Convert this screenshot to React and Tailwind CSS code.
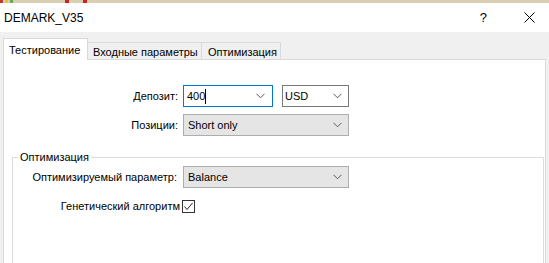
import React from "react";

const Chevron = () => (
  <svg width="9" height="6" viewBox="0 0 9 6" className="shrink-0">
    <polyline points="0.5,0.8 4.5,4.8 8.5,0.8" fill="none" stroke="#5a5a5a" strokeWidth="1" />
  </svg>
);

export default function App() {
  const font = { fontFamily: '"Liberation Sans", Arial, sans-serif' };
  return (
    <div
      className="w-[549px] h-[263px] overflow-hidden bg-[#f0f0f0] flex flex-col text-[11px] leading-[16px] text-black whitespace-nowrap"
      style={font}
    >
      {/* top strip */}
      <div className="h-[3px] bg-[#d8ceb0] flex shrink-0">
        <span className="w-[3px] bg-[#c0392b]" />
        <span className="w-[2px]" />
        <span className="w-[3px] bg-[#e6c23a]" />
        <span className="w-[2px]" />
        <span className="w-[3px] bg-[#6aa84f]" />
        <span className="w-[52px]" />
        <span className="w-[4px] bg-[#cc2222]" />
        <span className="w-[14px]" />
        <span className="w-[4px] bg-[#cc2222]" />
      </div>

      {/* title bar */}
      <div className="h-[29px] bg-white flex items-center shrink-0 pl-[4px]">
        <span className="text-[12px]">DEMARK_V35</span>
        <span className="ml-auto text-[13px] mr-[37px]">?</span>
        <svg width="11" height="11" viewBox="0 0 11 11" className="mr-[14px]">
          <line x1="0.5" y1="0.5" x2="10.5" y2="10.5" stroke="#000" strokeWidth="1" />
          <line x1="10.5" y1="0.5" x2="0.5" y2="10.5" stroke="#000" strokeWidth="1" />
        </svg>
      </div>

      {/* body */}
      <div className="flex-1 flex flex-col pt-[6px]">
        {/* tabs */}
        <div className="flex items-end pl-[3px] h-[21px] shrink-0">
          <div className="relative z-10 h-[22px] mb-[-1px] w-[85px] shrink-0 bg-white border border-b-0 border-[#d9d9d9] pl-[5px] pt-[3px]">
            Тестирование
          </div>
          <div className="h-[17px] w-[114px] shrink-0 border-t border-r border-[#d9d9d9] pl-[5px] pt-[1px] bg-[#f0f0f0]">
            Входные параметры
          </div>
          <div className="h-[17px] w-[79px] shrink-0 border-t border-r border-[#d9d9d9] pl-[6px] pt-[1px] bg-[#f0f0f0]">
            Оптимизация
          </div>
        </div>

        {/* panel */}
        <div className="ml-[3px] w-[543px] flex-1 bg-white border border-[#d9d9d9] pt-[25px]">
          <div className="flex items-center h-[22px]">
            <div className="w-[174px] shrink-0 text-right">Депозит:</div>
            <div className="ml-[5px] w-[90px] shrink-0 h-[22px] border border-[#0078d7] bg-white flex items-center pl-[3px] pr-[7px]">
              <span>400</span>
              <span className="w-[1px] h-[15px] bg-black" />
              <span className="ml-auto"><Chevron /></span>
            </div>
            <div className="ml-[9px] w-[67px] shrink-0 h-[22px] border border-[#7a7a7a] bg-white flex items-center pl-[2px] pr-[6px]">
              <span>USD</span>
              <span className="ml-auto"><Chevron /></span>
            </div>
          </div>

          <div className="flex items-center h-[22px] mt-[7px]">
            <div className="w-[174px] shrink-0 text-right">Позиции:</div>
            <div className="ml-[5px] w-[166px] shrink-0 h-[22px] border border-[#adadad] bg-[#e5e5e5] flex items-center pl-[4px] pr-[6px]">
              <span>Short only</span>
              <span className="ml-auto"><Chevron /></span>
            </div>
          </div>

          <fieldset className="ml-[8px] mt-[13px] w-[532px] h-[115px] border border-[#dcdcdc]">
            <legend className="ml-[5px] px-[2px] leading-[16px]">Оптимизация</legend>
            <div className="flex items-center h-[22px] mt-[1px]">
              <div className="w-[164px] shrink-0 text-right">Оптимизируемый параметр:</div>
              <div className="ml-[6px] w-[166px] shrink-0 h-[22px] border border-[#adadad] bg-[#e5e5e5] flex items-center pl-[4px] pr-[6px]">
                <span>Balance</span>
                <span className="ml-auto"><Chevron /></span>
              </div>
            </div>
            <div className="flex items-center h-[14px] mt-[11px]">
              <div className="w-[167px] shrink-0 text-right">Генетический алгоритм</div>
              <div className="ml-[2px] w-[13px] h-[13px] shrink-0 border border-[#333333] bg-white flex items-center justify-center">
                <svg width="11" height="11" viewBox="0 0 11 11">
                  <polyline points="1.5,5.5 4,8.5 9.5,2" fill="none" stroke="#222" strokeWidth="1" />
                </svg>
              </div>
            </div>
          </fieldset>
        </div>
      </div>
    </div>
  );
}
